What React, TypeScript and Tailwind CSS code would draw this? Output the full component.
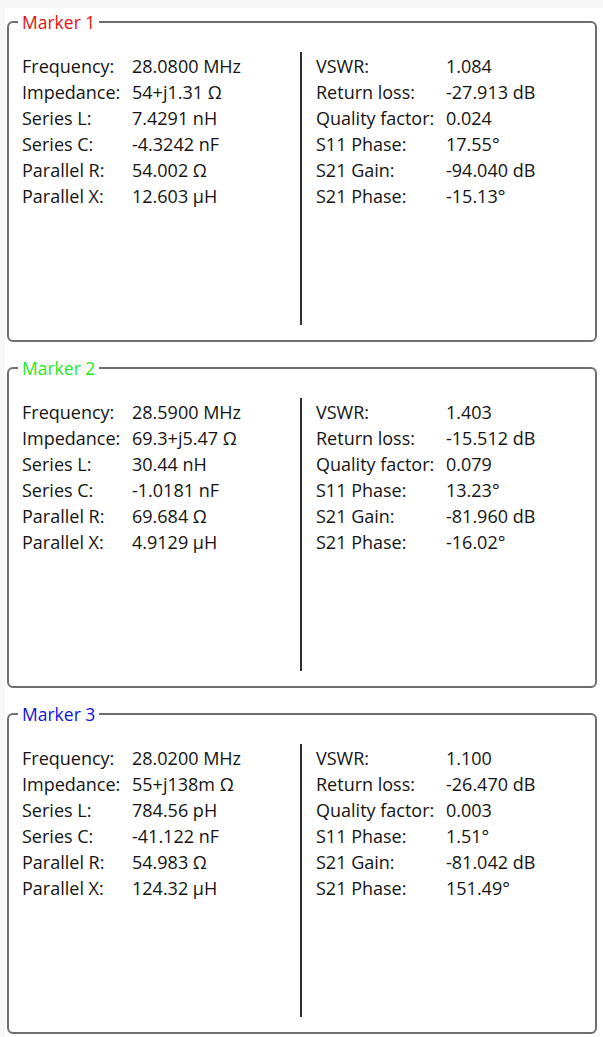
type Row = [string, string];

type Marker = {
  name: string;
  color: string;
  left: Row[];
  right: Row[];
};

const markers: Marker[] = [
  {
    name: 'Marker 1',
    color: 'text-[#e81010]',
    left: [
      ['Frequency:', '28.0800 MHz'],
      ['Impedance:', '54+j1.31 Ω'],
      ['Series L:', '7.4291 nH'],
      ['Series C:', '-4.3242 nF'],
      ['Parallel R:', '54.002 Ω'],
      ['Parallel X:', '12.603 µH'],
    ],
    right: [
      ['VSWR:', '1.084'],
      ['Return loss:', '-27.913 dB'],
      ['Quality factor:', '0.024'],
      ['S11 Phase:', '17.55°'],
      ['S21 Gain:', '-94.040 dB'],
      ['S21 Phase:', '-15.13°'],
    ],
  },
  {
    name: 'Marker 2',
    color: 'text-[#1ee81e]',
    left: [
      ['Frequency:', '28.5900 MHz'],
      ['Impedance:', '69.3+j5.47 Ω'],
      ['Series L:', '30.44 nH'],
      ['Series C:', '-1.0181 nF'],
      ['Parallel R:', '69.684 Ω'],
      ['Parallel X:', '4.9129 µH'],
    ],
    right: [
      ['VSWR:', '1.403'],
      ['Return loss:', '-15.512 dB'],
      ['Quality factor:', '0.079'],
      ['S11 Phase:', '13.23°'],
      ['S21 Gain:', '-81.960 dB'],
      ['S21 Phase:', '-16.02°'],
    ],
  },
  {
    name: 'Marker 3',
    color: 'text-[#1010d8]',
    left: [
      ['Frequency:', '28.0200 MHz'],
      ['Impedance:', '55+j138m Ω'],
      ['Series L:', '784.56 pH'],
      ['Series C:', '-41.122 nF'],
      ['Parallel R:', '54.983 Ω'],
      ['Parallel X:', '124.32 µH'],
    ],
    right: [
      ['VSWR:', '1.100'],
      ['Return loss:', '-26.470 dB'],
      ['Quality factor:', '0.003'],
      ['S11 Phase:', '1.51°'],
      ['S21 Gain:', '-81.042 dB'],
      ['S21 Phase:', '151.49°'],
    ],
  },
];

function Rows({ rows, labelWidth }: { rows: Row[]; labelWidth: string }) {
  return (
    <div className="pt-px">
      {rows.map(([label, value]) => (
        <div key={label} className="flex h-[26px] items-center">
          <span className={`${labelWidth} shrink-0`}>{label}</span>
          <span>{value}</span>
        </div>
      ))}
    </div>
  );
}

function MarkerBox({ marker }: { marker: Marker }) {
  return (
    <fieldset className="mx-[2px] mr-[6px] rounded-[6px] border-2 border-[#6e6e6e] pt-[18px] pb-[15px] pl-[13px]">
      <legend className={`-ml-[4px] px-[4px] text-[17.5px] leading-[24px] ${marker.color}`}>{marker.name}</legend>
      <div className="flex h-[273px]">
        <div className="w-[278px] shrink-0">
          <Rows rows={marker.left} labelWidth="w-[110px]" />
        </div>
        <div className="flex-1 border-l-2 border-[#303030] pl-[14px]">
          <Rows rows={marker.right} labelWidth="w-[130px]" />
        </div>
      </div>
    </fieldset>
  );
}

export default function App() {
  return (
    <div className="min-h-[1037px] bg-[#f7f7f7] pt-[8px] pl-[5px]">
      <div
        className="flex min-h-[1029px] flex-col gap-[14px] bg-white pt-[2px] text-[18px] text-[#141414]"
        style={{ fontFamily: '"Open Sans", "Noto Sans", sans-serif' }}
      >
        {markers.map((m) => (
          <MarkerBox key={m.name} marker={m} />
        ))}
      </div>
    </div>
  );
}
